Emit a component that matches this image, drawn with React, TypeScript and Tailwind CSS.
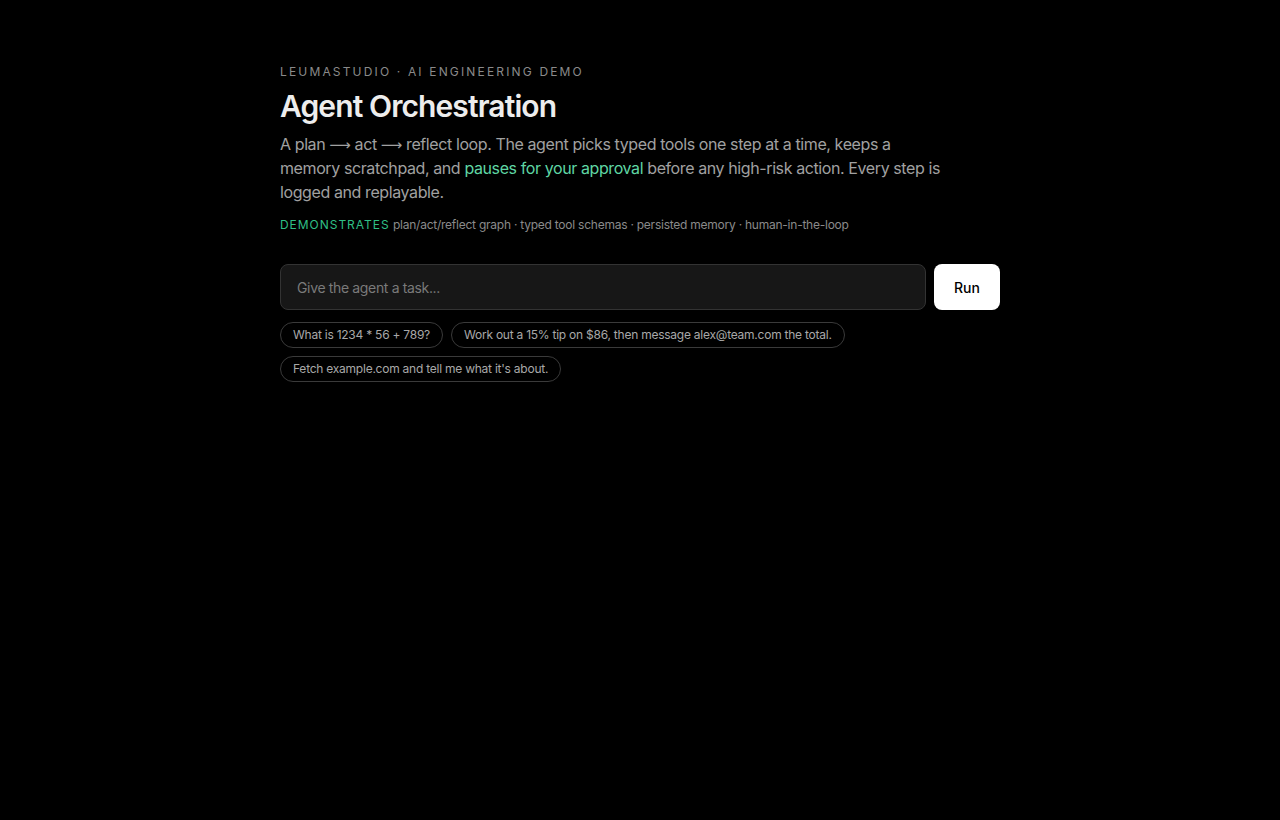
import { useState } from 'react';

const examples = [
  'What is 1234 * 56 + 789?',
  'Work out a 15% tip on $86, then message alex@team.com the total.',
  "Fetch example.com and tell me what it's about.",
];

function Arrow() {
  return (
    <span className="leading-[0] text-[15px]" style={{ fontFamily: '"DejaVu Sans", sans-serif' }}>
      ⟶
    </span>
  );
}

export default function App() {
  const [task, setTask] = useState('');

  return (
    <div
      className="min-h-screen bg-black text-neutral-100"
      style={{ fontFamily: 'Inter, "Noto Sans", sans-serif' }}
    >
      <main className="mx-auto w-[720px] pt-[64px]">
        {/* Header */}
        <p className="text-[12px] leading-[16px] tracking-[0.18em] text-[#8a8a8a]">
          LEUMASTUDIO · AI ENGINEERING DEMO
        </p>
        <h1 className="mt-[7px] text-[30px] leading-[38px] font-semibold tracking-[-0.03em] text-[#ededed]">
          Agent Orchestration
        </h1>
        <p className="mt-[7px] max-w-[672px] text-[16px] leading-[24px] tracking-[-0.025em] text-[#a1a1a1]">
          A plan <Arrow /> act <Arrow /> reflect loop. The agent picks typed tools one step at a
          time, keeps a memory scratchpad, and{' '}
          <span className="text-[#5fd6a4]">pauses for your approval</span> before any high-risk
          action. Every step is logged and replayable.
        </p>
        <p className="mt-[13px] text-[12px] leading-[16px] text-[#8a8a8a]">
          <span className="tracking-[0.08em] text-[#2fbf85]">DEMONSTRATES</span>{' '}
          <span className="tracking-[-0.02em]">
            plan/act/reflect graph · typed tool schemas · persisted memory · human-in-the-loop
          </span>
        </p>

        {/* Task input */}
        <div className="mt-[31px] flex gap-2">
          <input
            value={task}
            onChange={e => setTask(e.target.value)}
            placeholder="Give the agent a task..."
            className="h-[46px] flex-1 rounded-lg border border-[#333333] bg-[#171717] px-4 text-[14px] tracking-[-0.025em] text-neutral-100 placeholder-[#7a7a7a] outline-none"
          />
          <button className="h-[46px] w-[66px] rounded-lg bg-white text-[14px] font-medium text-black">
            Run
          </button>
        </div>

        {/* Example prompts */}
        <div className="mt-[12px] flex flex-wrap gap-2">
          {examples.map(ex => (
            <button
              key={ex}
              onClick={() => setTask(ex)}
              className="h-[26px] rounded-full border border-[#3a3a3a] px-3 text-[12px] tracking-[-0.02em] text-[#a8a8a8]"
            >
              {ex}
            </button>
          ))}
        </div>
      </main>
    </div>
  );
}
